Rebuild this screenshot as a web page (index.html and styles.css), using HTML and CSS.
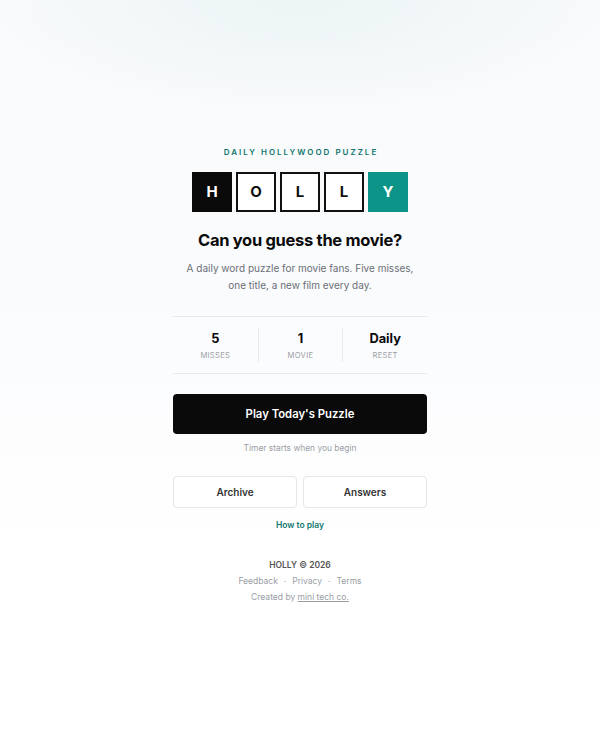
FILE: index.html
```html
<!DOCTYPE html>
<html lang="en">
<head>
<meta charset="utf-8">
<title>Holly</title>
<link rel="stylesheet" href="styles.css">
</head>
<body>
<main class="page">
  <div class="card">
    <div class="eyebrow">DAILY HOLLYWOOD PUZZLE</div>
    <div class="tiles">
      <span class="tile tile-dark">H</span>
      <span class="tile">O</span>
      <span class="tile">L</span>
      <span class="tile">L</span>
      <span class="tile tile-teal">Y</span>
    </div>
    <h1 class="title">Can you guess the movie?</h1>
    <p class="lead">A daily word puzzle for movie fans. Five misses,<br>one title, a new film every day.</p>
    <div class="stats">
      <div class="stat"><div class="stat-value">5</div><div class="stat-label">MISSES</div></div>
      <div class="stat"><div class="stat-value">1</div><div class="stat-label">MOVIE</div></div>
      <div class="stat"><div class="stat-value">Daily</div><div class="stat-label">RESET</div></div>
    </div>
    <button class="play">Play Today's Puzzle</button>
    <div class="hint">Timer starts when you begin</div>
    <div class="secondary">
      <button class="ghost">Archive</button>
      <button class="ghost">Answers</button>
    </div>
    <a class="howto" href="#">How to play</a>
    <footer class="footer">
      <div class="brand">HOLLY © 2026</div>
      <div class="links"><a href="#">Feedback</a><span class="dot">·</span><a href="#">Privacy</a><span class="dot">·</span><a href="#">Terms</a></div>
      <div class="credit">Created by <a href="#" class="credit-link">mini tech co.</a></div>
    </footer>
  </div>
</main>
</body>
</html>
```
FILE: styles.css
```css
* { box-sizing: border-box; }
html, body { margin: 0; padding: 0; }
body {
  font-family: Inter, "Noto Sans", Arial, sans-serif;
  color: #111;
  background:
    radial-gradient(ellipse 300px 110px at 50% 0, rgba(205, 230, 226, 0.28), rgba(255,255,255,0) 100%),
    linear-gradient(180deg, #f8fafc 0px, #fafbfd 300px, #ffffff 560px, #ffffff 100%);
  min-height: 750px;
}
.page {
  min-height: 750px;
  display: flex;
  align-items: center;
  justify-content: center;
}
.card {
  width: 254px;
  display: flex;
  flex-direction: column;
  align-items: center;
  text-align: center;
  padding-bottom: 2px;
}
.eyebrow {
  font-size: 8px;
  font-weight: 600;
  letter-spacing: 2px;
  color: #0f766e;
  line-height: 12px;
  margin-left: 2px;
}
.tiles {
  display: flex;
  gap: 4px;
  margin-top: 14px;
}
.tile {
  width: 40px;
  height: 40px;
  border: 2px solid #111;
  background: #fff;
  display: flex;
  align-items: center;
  justify-content: center;
  font-size: 15px;
  font-weight: 700;
  color: #111;
}
.tile-dark { background: #0a0a0a; border-color: #0a0a0a; color: #fff; }
.tile-teal { background: #0d9488; border-color: #0d9488; color: #fff; }
.title {
  margin: 17px 0 0;
  font-size: 16.5px;
  font-weight: 700;
  letter-spacing: -0.3px;
  line-height: 22px;
  color: #0a0a0a;
}
.lead {
  margin: 9px 0 0;
  font-size: 10px;
  line-height: 17px;
  color: #6b6f76;
}
.stats {
  margin-top: 22px;
  width: 100%;
  display: grid;
  grid-template-columns: 1fr 1fr 1fr;
  border-top: 1px solid #e8eaed;
  border-bottom: 1px solid #e8eaed;
  padding: 11px 0 11px;
}
.stat + .stat { border-left: 1px solid #e8eaed; }
.stat { padding: 2px 0 1px; }
.stat-value {
  font-size: 12.8px;
  font-weight: 700;
  line-height: 18px;
  color: #0a0a0a;
}
.stat-label {
  margin-top: 3px;
  font-size: 7.6px;
  letter-spacing: 0.3px;
  line-height: 10px;
  color: #9a9ea5;
}
.play {
  margin-top: 20px;
  width: 100%;
  height: 40px;
  border: none;
  border-radius: 4px;
  background: #0a0a0a;
  color: #fff;
  font-family: inherit;
  font-size: 11.3px;
  font-weight: 600;
}
.hint {
  margin-top: 8px;
  font-size: 8.4px;
  line-height: 12px;
  color: #9a9ea5;
}
.secondary {
  margin-top: 22px;
  width: 100%;
  display: grid;
  grid-template-columns: 1fr 1fr;
  gap: 6px;
}
.ghost {
  height: 32px;
  border: 1px solid #e5e7eb;
  border-radius: 4px;
  background: #fff;
  font-family: inherit;
  font-size: 10px;
  font-weight: 600;
  color: #333;
}
.howto {
  margin-top: 11px;
  font-size: 8.5px;
  font-weight: 600;
  line-height: 12px;
  color: #0f766e;
  text-decoration: none;
}
.footer {
  margin-top: 28px;
  display: flex;
  flex-direction: column;
  gap: 4px;
  font-size: 8.5px;
  line-height: 12px;
  color: #9a9ea5;
}
.brand { font-weight: 600; color: #555; }
.links a { color: #9a9ea5; text-decoration: none; }
.dot { margin: 0 6px; }
.credit { color: #9a9ea5; }
.credit-link { color: #9a9ea5; text-decoration: underline; }
```
